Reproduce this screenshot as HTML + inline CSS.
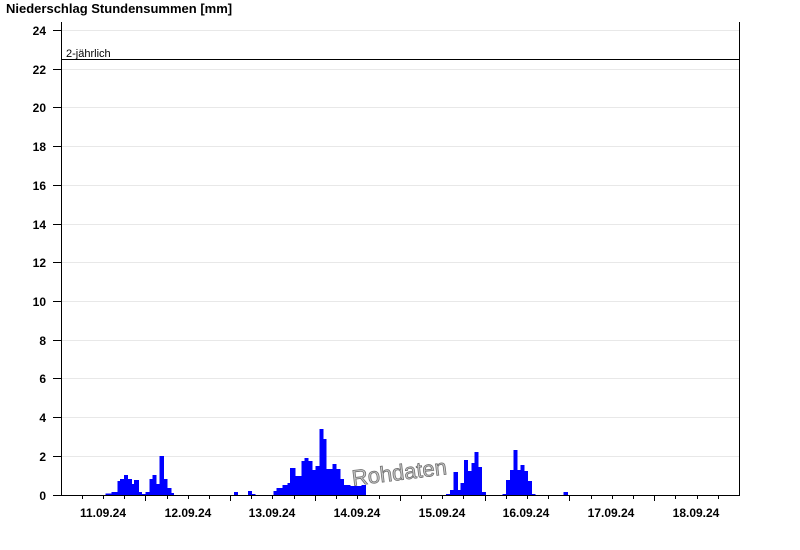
<!DOCTYPE html>
<html><head><meta charset="utf-8"><style>
html,body{margin:0;padding:0;background:#fff;width:800px;height:550px;overflow:hidden}
svg{display:block}
text{font-family:"Liberation Sans",Arial,sans-serif}
</style></head><body>
<svg width="800" height="550" viewBox="0 0 800 550" xmlns="http://www.w3.org/2000/svg">
<text x="6" y="13" font-size="13" font-weight="bold" fill="#000">Niederschlag Stundensummen [mm]</text>
<g stroke="#e8e8e8" stroke-width="1">
<line x1="61" x2="740" y1="30.5" y2="30.5"/><line x1="61" x2="740" y1="69.5" y2="69.5"/>
<line x1="61" x2="740" y1="107.5" y2="107.5"/><line x1="61" x2="740" y1="146.5" y2="146.5"/>
<line x1="61" x2="740" y1="185.5" y2="185.5"/><line x1="61" x2="740" y1="224.5" y2="224.5"/>
<line x1="61" x2="740" y1="262.5" y2="262.5"/><line x1="61" x2="740" y1="301.5" y2="301.5"/>
<line x1="61" x2="740" y1="340.5" y2="340.5"/><line x1="61" x2="740" y1="378.5" y2="378.5"/>
<line x1="61" x2="740" y1="417.5" y2="417.5"/><line x1="61" x2="740" y1="456.5" y2="456.5"/>
</g>
<g font-size="12" font-weight="bold" text-anchor="end" fill="#000">
<text x="46" y="35">24</text><text x="46" y="74">22</text><text x="46" y="112">20</text>
<text x="46" y="151">18</text><text x="46" y="190">16</text><text x="46" y="229">14</text>
<text x="46" y="267">12</text><text x="46" y="306">10</text><text x="46" y="345">8</text>
<text x="46" y="383">6</text><text x="46" y="422">4</text><text x="46" y="461">2</text><text x="46" y="500">0</text>
</g>
<g stroke="#000" stroke-width="1">
<line x1="53" x2="61" y1="30.5" y2="30.5"/><line x1="53" x2="61" y1="69.5" y2="69.5"/>
<line x1="53" x2="61" y1="107.5" y2="107.5"/><line x1="53" x2="61" y1="146.5" y2="146.5"/>
<line x1="53" x2="61" y1="185.5" y2="185.5"/><line x1="53" x2="61" y1="224.5" y2="224.5"/>
<line x1="53" x2="61" y1="262.5" y2="262.5"/><line x1="53" x2="61" y1="301.5" y2="301.5"/>
<line x1="53" x2="61" y1="340.5" y2="340.5"/><line x1="53" x2="61" y1="378.5" y2="378.5"/>
<line x1="53" x2="61" y1="417.5" y2="417.5"/><line x1="53" x2="61" y1="456.5" y2="456.5"/>
<line x1="53" x2="61" y1="495.5" y2="495.5"/>
</g>
<g fill="#0000ff" shape-rendering="crispEdges">
<rect x="105.7" y="493.7" width="6" height="1.3"/>
<rect x="111.7" y="492" width="5.6" height="3"/>
<rect x="117.3" y="481" width="2.7" height="14"/>
<rect x="120" y="479" width="4" height="16"/>
<rect x="124" y="475" width="4" height="20"/>
<rect x="128" y="479" width="4" height="16"/>
<rect x="132" y="484" width="2" height="11"/>
<rect x="134" y="480" width="5" height="15"/>
<rect x="139" y="492" width="3" height="3"/>
<rect x="142" y="494" width="3.3" height="1"/>
<rect x="145.3" y="492" width="4" height="3"/>
<rect x="149.3" y="479" width="3.4" height="16"/>
<rect x="152.7" y="475" width="4" height="20"/>
<rect x="156.7" y="484" width="2.6" height="11"/>
<rect x="159.3" y="456" width="4.7" height="39"/>
<rect x="164" y="479" width="3.3" height="16"/>
<rect x="167.3" y="488" width="4" height="7"/>
<rect x="171.3" y="493" width="2.7" height="2"/>
<rect x="234" y="492" width="4" height="3"/>
<rect x="248" y="491" width="4" height="4"/>
<rect x="252" y="494" width="3.3" height="1"/>
<rect x="273.3" y="491" width="3.4" height="4"/>
<rect x="276.7" y="488" width="6" height="7"/>
<rect x="282.7" y="485" width="4.6" height="10"/>
<rect x="287.3" y="483" width="2.7" height="12"/>
<rect x="290" y="468" width="5.3" height="27"/>
<rect x="295.3" y="476" width="6" height="19"/>
<rect x="301.3" y="461" width="3.4" height="34"/>
<rect x="304.7" y="458" width="4" height="37"/>
<rect x="308.7" y="461" width="4" height="34"/>
<rect x="312.7" y="470" width="2.6" height="25"/>
<rect x="315.3" y="466" width="4" height="29"/>
<rect x="319.3" y="429" width="4" height="66"/>
<rect x="323.3" y="439" width="3.4" height="56"/>
<rect x="326.7" y="469" width="6" height="26"/>
<rect x="332.7" y="464" width="4" height="31"/>
<rect x="336.7" y="469" width="4" height="26"/>
<rect x="340.7" y="479" width="3.3" height="16"/>
<rect x="344" y="485" width="6.7" height="10"/>
<rect x="350.7" y="486" width="4" height="9"/>
<rect x="354.7" y="486" width="4" height="9"/>
<rect x="358.7" y="486" width="2.6" height="9"/>
<rect x="361.3" y="485" width="4.7" height="10"/>
<rect x="446" y="494" width="4" height="1"/>
<rect x="450" y="490" width="3.3" height="5"/>
<rect x="453.3" y="472" width="4.7" height="23"/>
<rect x="458" y="490" width="2.7" height="5"/>
<rect x="460.7" y="483" width="3.3" height="12"/>
<rect x="464" y="460" width="4" height="35"/>
<rect x="468" y="471" width="3.3" height="24"/>
<rect x="471.3" y="463" width="3.4" height="32"/>
<rect x="474.7" y="452" width="4" height="43"/>
<rect x="478.7" y="467" width="3.3" height="28"/>
<rect x="482" y="492" width="4" height="3"/>
<rect x="502.7" y="494" width="3.3" height="1"/>
<rect x="506" y="480" width="4" height="15"/>
<rect x="510" y="470" width="3.3" height="25"/>
<rect x="513.3" y="450" width="4" height="45"/>
<rect x="517.3" y="470" width="3.4" height="25"/>
<rect x="520.7" y="465" width="4" height="30"/>
<rect x="524.7" y="471" width="3.3" height="24"/>
<rect x="528" y="481" width="4" height="14"/>
<rect x="532" y="494" width="3.3" height="1"/>
<rect x="563.3" y="492" width="4.7" height="3"/>
</g>
<line x1="61" x2="740" y1="59.5" y2="59.5" stroke="#000" stroke-width="1"/>
<text x="66" y="57" font-size="11" fill="#000">2-jährlich</text>
<g stroke="#000" stroke-width="1">
<line x1="61.5" x2="61.5" y1="22" y2="495"/>
<line x1="739.5" x2="739.5" y1="22" y2="495"/>
<line x1="61" x2="740" y1="495.5" y2="495.5"/>
</g>
<g stroke="#000" stroke-width="1">
<line x1="82.5" x2="82.5" y1="495" y2="499"/><line x1="103.5" x2="103.5" y1="495" y2="499"/><line x1="124.5" x2="124.5" y1="495" y2="499"/>
<line x1="145.5" x2="145.5" y1="495" y2="501"/>
<line x1="167.5" x2="167.5" y1="495" y2="499"/><line x1="188.5" x2="188.5" y1="495" y2="499"/><line x1="209.5" x2="209.5" y1="495" y2="499"/>
<line x1="230.5" x2="230.5" y1="495" y2="501"/>
<line x1="251.5" x2="251.5" y1="495" y2="499"/><line x1="272.5" x2="272.5" y1="495" y2="499"/><line x1="294.5" x2="294.5" y1="495" y2="499"/>
<line x1="315.5" x2="315.5" y1="495" y2="501"/>
<line x1="336.5" x2="336.5" y1="495" y2="499"/><line x1="357.5" x2="357.5" y1="495" y2="499"/><line x1="379.5" x2="379.5" y1="495" y2="499"/>
<line x1="400.5" x2="400.5" y1="495" y2="501"/>
<line x1="421.5" x2="421.5" y1="495" y2="499"/><line x1="442.5" x2="442.5" y1="495" y2="499"/><line x1="463.5" x2="463.5" y1="495" y2="499"/>
<line x1="485.5" x2="485.5" y1="495" y2="501"/>
<line x1="506.5" x2="506.5" y1="495" y2="499"/><line x1="527.5" x2="527.5" y1="495" y2="499"/><line x1="548.5" x2="548.5" y1="495" y2="499"/>
<line x1="569.5" x2="569.5" y1="495" y2="501"/>
<line x1="591.5" x2="591.5" y1="495" y2="499"/><line x1="612.5" x2="612.5" y1="495" y2="499"/><line x1="633.5" x2="633.5" y1="495" y2="499"/>
<line x1="654.5" x2="654.5" y1="495" y2="501"/>
<line x1="675.5" x2="675.5" y1="495" y2="499"/><line x1="697.5" x2="697.5" y1="495" y2="499"/><line x1="718.5" x2="718.5" y1="495" y2="499"/>
</g>
<g font-size="12" font-weight="bold" text-anchor="middle" fill="#000">
<text x="103" y="517">11.09.24</text><text x="188" y="517">12.09.24</text>
<text x="272" y="517">13.09.24</text><text x="357" y="517">14.09.24</text>
<text x="442" y="517">15.09.24</text><text x="526" y="517">16.09.24</text>
<text x="611" y="517">17.09.24</text><text x="696" y="517">18.09.24</text>
</g>
<text x="399" y="480" font-size="22" text-anchor="middle" fill="#c8c8c8" stroke="#707070" stroke-width="0.8" transform="rotate(-7 399 470)">Rohdaten</text>
</svg>
</body></html>
